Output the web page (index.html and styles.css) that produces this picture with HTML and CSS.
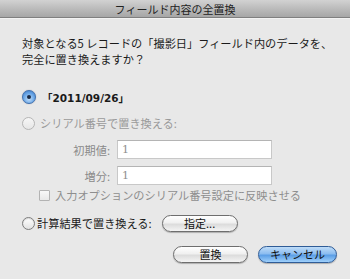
FILE: index.html
```html
<!DOCTYPE html>
<html lang="ja">

<head>
    <meta charset="UTF-8">
    <meta name="viewport" content="width=device-width, initial-scale=1.0">
    <title>フィールド内容の全置換</title>
    <link rel="stylesheet" href="styles.css">
</head>

<body>
    <div class="dialog">
        <!-- Title bar -->
        <div class="titlebar">フィールド内容の全置換</div>

        <div class="content">
            <p class="message">対象となる5 レコードの「撮影日」フィールド内のデータを、<br>完全に置き換えますか？</p>

            <div class="option option-first">
                <span class="radio radio-on"></span>
                <span class="option-text value-text">「2011/09/26」</span>
            </div>

            <div class="option option-disabled">
                <span class="radio radio-disabled"></span>
                <span class="option-text">シリアル番号で置き換える:</span>
            </div>

            <!-- Serial number settings -->
            <div class="serial">
                <div class="field">
                    <span class="field-label">初期値:</span>
                    <input class="field-input" type="text" value="1" disabled>
                </div>
                <div class="field field-second">
                    <span class="field-label">増分:</span>
                    <input class="field-input" type="text" value="1" disabled>
                </div>
                <div class="check">
                    <span class="checkbox"></span>
                    <span>入力オプションのシリアル番号設定に反映させる</span>
                </div>
            </div>

            <div class="option option-calc">
                <span class="radio"></span>
                <span class="option-text">計算結果で置き換える:</span>
                <button class="pill pill-spec">指定...</button>
            </div>

            <div class="actions">
                <button class="pill pill-replace">置換</button>
                <button class="pill pill-default">キャンセル</button>
            </div>
        </div>
    </div>
</body>

</html>
```

FILE: styles.css
```css
body {
    margin: 0;
    padding: 0;
    background-color: #e8e8e8;
    font-family: 'Noto Sans CJK JP', 'Noto Sans', sans-serif;
    font-size: 11px;
    color: #1a1a1a;
}

.dialog {
    width: 350px;
    height: 279px;
    background-color: #e8e8e8;
    overflow: hidden;
}

/* Title bar */
.titlebar {
    height: 17px;
    line-height: 18px;
    text-align: center;
    font-size: 11px;
    color: #222;
    background: linear-gradient(#d2d2d2, #b9b9b9 55%, #a6a6a6);
    border-bottom: 1px solid #7f7f7f;
    box-shadow: 0 1px 0 #f2f2f2;
}

.content {
    padding: 17px 0 0 22px;
}

.message {
    margin: 0;
    line-height: 16px;
    font-size: 11.2px;
}

/* Radio rows */
.option {
    display: flex;
    align-items: center;
    height: 16px;
}

.option-first {
    margin-top: 22px;
}

.option-disabled {
    margin-top: 10px;
    color: #9a9a9a;
}

.option-text {
    margin-left: 5px;
    font-size: 11.2px;
}

.value-text {
    margin-left: 6px;
    font-family: 'DejaVu Sans', 'Noto Sans CJK JP', sans-serif;
    font-weight: bold;
    font-size: 10.5px;
}

.radio {
    width: 11px;
    height: 11px;
    border-radius: 50%;
    border: 1px solid #7c7c7c;
    background: linear-gradient(#ffffff, #e2e2e2);
    box-shadow: inset 0 1px 1px rgba(0, 0, 0, 0.15);
    position: relative;
    flex-shrink: 0;
}

.radio-on {
    width: 12px;
    height: 12px;
    border-color: #3d6fae;
    background: radial-gradient(circle at 50% 65%, #c4e0fb, #6aa6e6 55%, #3a79c7);
    box-shadow: 0 0 1px rgba(0, 0, 60, 0.4);
}

.radio-on::after {
    content: '';
    position: absolute;
    top: 4px;
    left: 4px;
    width: 4px;
    height: 4px;
    border-radius: 50%;
    background-color: #1b2a45;
}

.radio-disabled {
    border-color: #b5b5b5;
    background: linear-gradient(#f6f6f6, #e6e6e6);
    box-shadow: none;
}

/* Serial number block */
.serial {
    margin-top: 9px;
    color: #8a8a8a;
}

.field {
    display: flex;
    align-items: center;
    height: 19px;
}

.field-second {
    margin-top: 7px;
}

.field-label {
    width: 88px;
    text-align: right;
    font-size: 11.2px;
}

.field-input {
    margin-left: 7px;
    width: 155px;
    height: 19px;
    box-sizing: border-box;
    padding: 0 4px;
    border: 1px solid #c8c8c8;
    border-top-color: #b4b4b4;
    background-color: #fff;
    color: #8f8f8f;
    font-family: 'DejaVu Serif', serif;
    font-size: 11px;
    outline: none;
}

.check {
    display: flex;
    align-items: center;
    height: 16px;
    margin-top: 2px;
    padding-left: 17px;
    font-size: 11.2px;
    color: #8e8e8e;
}

.checkbox {
    width: 9px;
    height: 9px;
    margin-right: 5px;
    border: 1px solid #b3b3b3;
    background: linear-gradient(#f8f8f8, #e8e8e8);
    border-radius: 1px;
}

/* Calculation row */
.option-calc {
    margin-top: 12px;
}

.option-calc .option-text {
    margin-left: 2px;
}

/* Aqua style buttons */
.pill {
    height: 17px;
    padding: 0;
    border: 1px solid #6e6e6e;
    border-radius: 9px;
    background: linear-gradient(#ffffff, #f0f0f0 45%, #dcdcdc 55%, #f4f4f4);
    font-family: 'Noto Sans CJK JP', 'Noto Sans', sans-serif;
    font-size: 11px;
    line-height: 15px;
    color: #111;
    box-shadow: 0 1px 1px rgba(0, 0, 0, 0.25);
}

.pill-spec {
    width: 76px;
    margin-left: 10px;
}

.actions {
    display: flex;
    justify-content: flex-end;
    gap: 10px;
    margin-top: 15px;
    padding-right: 13px;
}

.pill-replace {
    width: 75px;
}

.pill-default {
    width: 79px;
    border-color: #2f5c97;
    background: linear-gradient(#bfdcf8, #8cbdf0 45%, #5b9ee6 55%, #9fd0fb);
}
```
